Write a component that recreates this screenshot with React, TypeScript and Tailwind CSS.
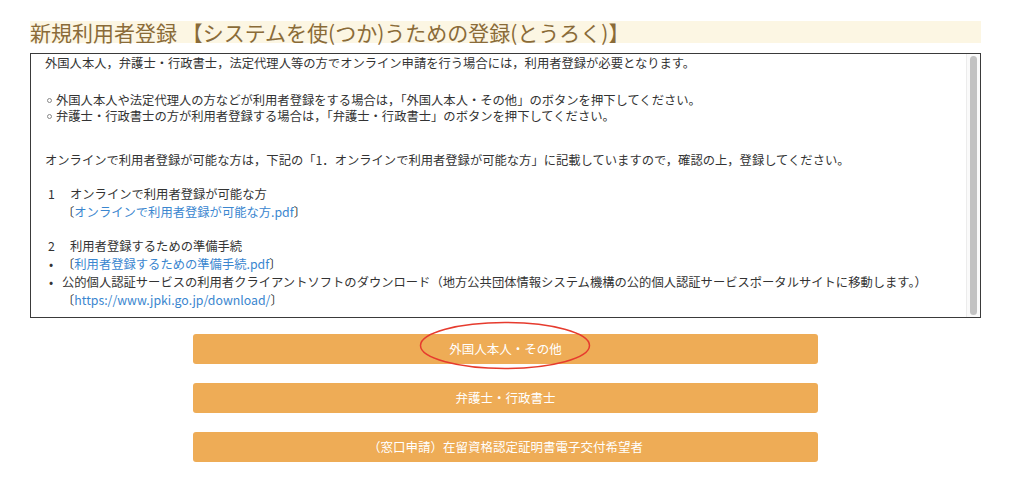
import React from "react";

const links = "text-[#3a86cf]";

const buttons = ["外国人本人・その他", "弁護士・行政書士", "（窓口申請）在留資格認定証明書電子交付希望者"];

const Ring = () => (
  <span className="flex w-[11px] shrink-0 items-center pl-[2px]">
    <span className="h-[5px] w-[5px] rounded-full border border-[#888]" />
  </span>
);

export default function App() {
  return (
    <div className="min-h-[484px] w-[1024px] bg-white font-['Noto_Sans_CJK_JP','Noto_Sans',sans-serif]">
      <div className="ml-[30px] flex w-[951px] flex-col pt-[21px]">
        <h1 className="h-[22px] bg-[#fcf6e3] text-[21px] leading-[22px] font-normal text-[#8a6b38] whitespace-nowrap">
          新規利用者登録 【システムを使(つか)うための登録(とうろく)】
        </h1>

        {/* notice box */}
        <div className="mt-[10px] flex h-[265px] border border-[#3a3a3a] bg-white">
          <div className="flex-1 pl-[14px] text-[12.3px] leading-[18px] text-[#333]">
            <p>外国人本人，弁護士・行政書士，法定代理人等の方でオンライン申請を行う場合には，利用者登録が必要となります。</p>
            <ul className="mt-[20px] leading-[16px]">
              <li className="flex">
                <Ring />
                <span>外国人本人や法定代理人の方などが利用者登録をする場合は，「外国人本人・その他」のボタンを押下してください。</span>
              </li>
              <li className="flex">
                <Ring />
                <span>弁護士・行政書士の方が利用者登録する場合は，「弁護士・行政書士」のボタンを押下してください。</span>
              </li>
            </ul>
            <p className="mt-[27px]">オンラインで利用者登録が可能な方は，下記の「1．オンラインで利用者登録が可能な方」に記載していますので，確認の上，登録してください。</p>
            <div className="mt-[16px] flex">
              <span className="w-[25px] pl-[3px]">1</span>
              <span>オンラインで利用者登録が可能な方</span>
            </div>
            <div className="pl-[17px]">
              〔<span className={links}>オンラインで利用者登録が可能な方.pdf</span>〕
            </div>
            <div className="mt-[16px] flex">
              <span className="w-[25px] pl-[3px]">2</span>
              <span>利用者登録するための準備手続</span>
            </div>
            <ul>
              <li className="flex">
                <span className="w-[17px] pl-[4px]">•</span>
                <span>
                  〔<span className={links}>利用者登録するための準備手続.pdf</span>〕
                </span>
              </li>
              <li className="flex">
                <span className="w-[17px] pl-[4px]">•</span>
                <span className="whitespace-nowrap">公的個人認証サービスの利用者クライアントソフトのダウンロード（地方公共団体情報システム機構の公的個人認証サービスポータルサイトに移動します。）</span>
              </li>
              <li className="pl-[17px]">
                〔<span className={links}>https://www.jpki.go.jp/download/</span>〕
              </li>
            </ul>
          </div>
          {/* scrollbar */}
          <div className="flex w-[14px] justify-center border-l border-[#ececec] bg-[#fafafa] py-[2px]">
            <div className="w-[7px] rounded-full bg-[#c2c2c2]" />
          </div>
        </div>

        <div className="mt-[16px] flex flex-col items-center gap-[19px]">
          {buttons.map((label, i) => (
            <div key={label} className="relative w-[625px]">
              <button className="flex h-[30px] w-full items-center justify-center rounded-[3px] bg-[#eeac56] text-[12.5px] text-white">
                {label}
              </button>
              {i === 0 && (
                <svg
                  className="pointer-events-none absolute left-[226px] top-[-13px]"
                  width="172"
                  height="49"
                  viewBox="0 0 172 49"
                >
                  <ellipse cx="86" cy="24.5" rx="84.5" ry="23" fill="none" stroke="#e63b2e" strokeWidth="1.5" />
                </svg>
              )}
            </div>
          ))}
        </div>
      </div>
    </div>
  );
}
